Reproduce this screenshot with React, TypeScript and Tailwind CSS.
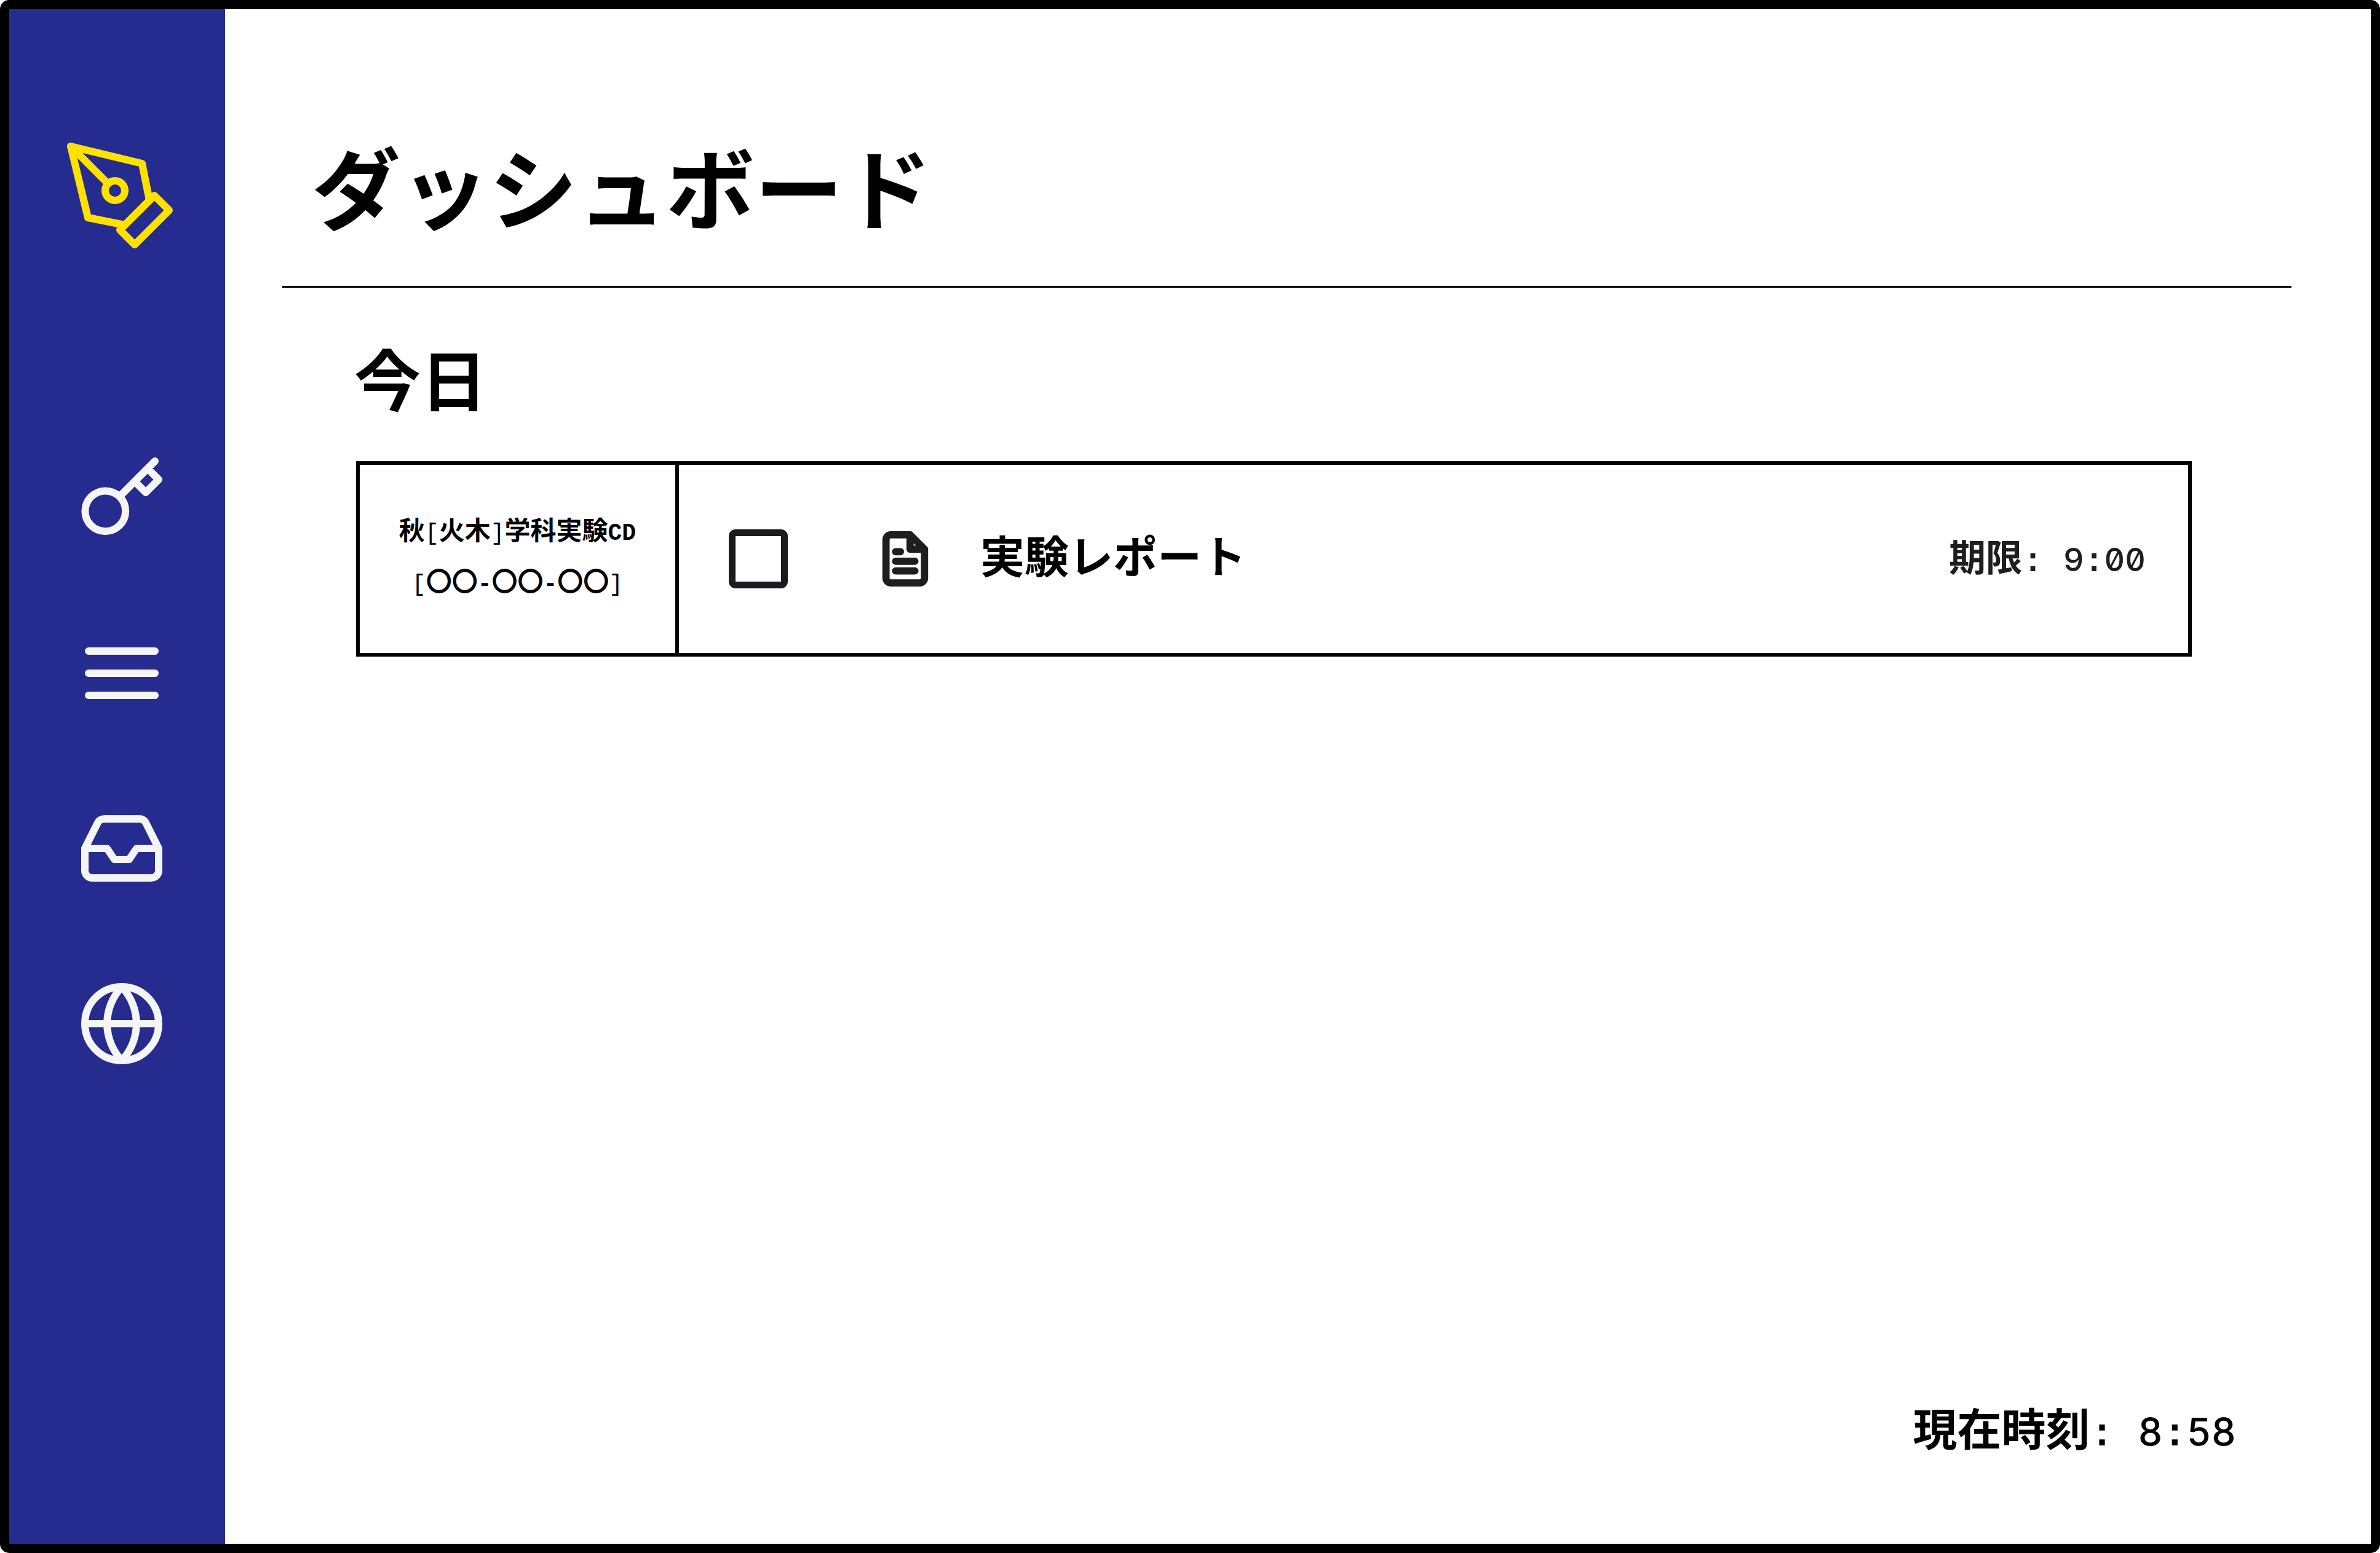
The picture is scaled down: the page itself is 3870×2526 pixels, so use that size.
import type { ReactNode } from "react";

function Icon({ className, strokeWidth = 2, children }: { className: string; strokeWidth?: number; children: ReactNode }) {
  return (
    <svg viewBox="0 0 24 24" fill="none" stroke="currentColor" strokeWidth={strokeWidth} strokeLinecap="round" strokeLinejoin="round" aria-hidden="true" className={className}>
      {children}
    </svg>
  );
}

const navItems: { label: string; icon: ReactNode }[] = [
  {
    label: "ログイン",
    icon: (
      <path d="M21 2l-2 2m-7.61 7.61a5.5 5.5 0 1 1-7.778 7.778 5.5 5.5 0 0 1 7.777-7.777zm0 0L15.5 7.5m0 0l3 3L22 7l-3-3m-3.5 3.5L19 4" />
    ),
  },
  { label: "メニュー", icon: <path d="M3 6h18M3 12h18M3 18h18" /> },
  {
    label: "受信箱",
    icon: (
      <>
        <path d="M22 12h-6l-2 3h-4l-2-3H2" />
        <path d="M5.45 5.11L2 12v6a2 2 0 0 0 2 2h16a2 2 0 0 0 2-2v-6l-3.45-6.89A2 2 0 0 0 16.76 4H7.24a2 2 0 0 0-1.79 1.11z" />
      </>
    ),
  },
  {
    label: "ウェブ",
    icon: (
      <>
        <circle cx="12" cy="12" r="10" />
        <path d="M2 12h20" />
        <path d="M12 2a15.3 15.3 0 0 1 4 10 15.3 15.3 0 0 1-4 10 15.3 15.3 0 0 1-4-10 15.3 15.3 0 0 1 4-10z" />
      </>
    ),
  },
];

function Sidebar() {
  return (
    <aside className="flex w-[351px] shrink-0 flex-col bg-[#262b8f] pt-[207px]">
      <a href="#home" aria-label="ホーム" className="ml-[84px] self-start text-[#ffe100]">
        <Icon className="size-[192px]" strokeWidth={1.5}>
          <path d="M12 19l7-7 3 3-7 7-3-3z" />
          <path d="M18 13l-1.5-7.5L2 2l3.5 14.5L13 18l5-5z" />
          <path d="M2 2l7.586 7.586" />
          <circle cx="11" cy="11" r="2" />
        </Icon>
      </a>
      <nav className="mt-[324px] ml-[111px] flex flex-col items-start gap-[141px] text-[#f5f5f5]">
        {navItems.map((item) => (
          <button key={item.label} type="button" aria-label={item.label}>
            <Icon className="size-36">{item.icon}</Icon>
          </button>
        ))}
      </nav>
    </aside>
  );
}

function Mono({ bold = false, children }: { bold?: boolean; children: ReactNode }) {
  return (
    <span className={`font-['Liberation_Mono',monospace] text-[38px] leading-none ${bold ? "font-bold" : "font-normal"}`}>
      {children}
    </span>
  );
}

type ClockProps = { label: string; hours: string; minutes: string; monoSize: string; digitSize: string };

function Clock({ label, hours, minutes, monoSize, digitSize }: ClockProps) {
  const colon = `font-['Liberation_Mono',monospace] leading-none font-bold whitespace-pre ${monoSize}`;
  return (
    <>
      <span className="font-bold">{label}</span>
      <span className={colon}>{": "}</span>
      <time
        dateTime={`${hours.padStart(2, "0")}:${minutes}`}
        className={`font-['Inter',sans-serif] leading-none font-medium slashed-zero tabular-nums ${digitSize}`}
      >
        {hours}
        <span className={colon}>:</span>
        {minutes}
      </time>
    </>
  );
}

function TaskRow() {
  return (
    <li className="flex border-6 border-black">
      <div className="flex w-[519px] shrink-0 flex-col items-center justify-center border-r-6 border-black pt-[62px] pb-[78px] text-[42px] leading-[83px] font-bold">
        <p className="whitespace-nowrap">
          秋<Mono>[</Mono>火木<Mono>]</Mono>学科実験<Mono bold>CD</Mono>
        </p>
        <p className="whitespace-nowrap">
          <Mono>[</Mono>〇〇<Mono bold>-</Mono>〇〇<Mono bold>-</Mono>〇〇<Mono>]</Mono>
        </p>
      </div>
      <div className="flex grow items-center pr-[69px] pl-[81px]">
        <input id="task-report" type="checkbox" className="size-24 shrink-0 appearance-none rounded-[11px] border-11 border-[#1d1b20] bg-white checked:bg-[#1d1b20]" />
        <Icon className="ml-36 size-[94px] text-[#1e1e1e]" strokeWidth={3}>
          <path d="M14 2H6a2 2 0 0 0-2 2v16a2 2 0 0 0 2 2h12a2 2 0 0 0 2-2V8z" />
          <path d="M14 2v6h6M16 13H8M16 17H8M10 9H8" />
        </Icon>
        <label htmlFor="task-report" className="ml-[75px] pb-4 text-7xl font-bold">
          実験レポート
        </label>
        <p className="ml-auto pb-1 text-6xl whitespace-nowrap text-[#1e1e1e]">
          <Clock label="期限" hours="9" minutes="00" monoSize="text-[55px]" digitSize="text-[52px]" />
        </p>
      </div>
    </li>
  );
}

export default function App() {
  return (
    <div lang="ja" className="flex min-h-screen overflow-hidden rounded-[15px] border-15 border-black bg-white font-['Noto_Sans_CJK_JP',sans-serif] text-black">
      <Sidebar />
      <main className="flex grow flex-col pr-[129px] pl-[93px]">
        <header className="border-b-3 border-black pt-[185px] pb-[65px] pl-12">
          <h1 className="text-[144px] leading-[200px] font-bold">ダッシュボード</h1>
        </header>
        <section className="pt-[67px]">
          <h2 className="pl-[117px] text-[108px] leading-[156px] font-bold">今日</h2>
          <ul className="mt-[59px] pr-[162px] pl-[120px]">
            <TaskRow />
          </ul>
        </section>
        <footer className="mt-auto pr-[90px] pb-[144px] text-right text-7xl">
          <Clock label="現在時刻" hours="8" minutes="58" monoSize="text-[65px]" digitSize="text-[62px]" />
        </footer>
      </main>
    </div>
  );
}
